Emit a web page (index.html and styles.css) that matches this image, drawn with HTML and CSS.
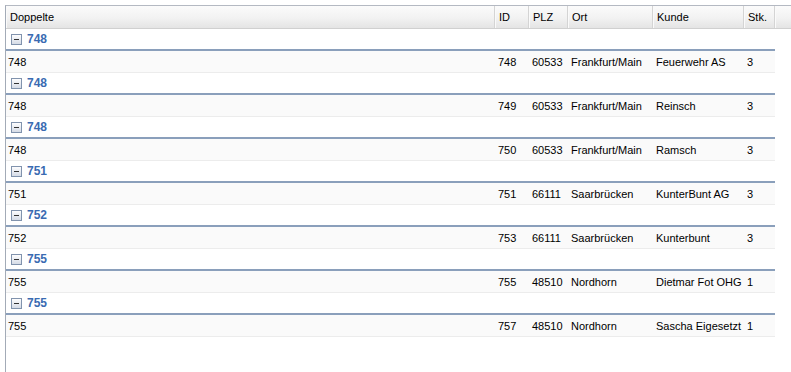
FILE: index.html
```html
<!DOCTYPE html>
<html lang="de">
<head>
<meta charset="utf-8">
<title>Doppelte</title>
<link rel="stylesheet" href="styles.css">
</head>
<body>
<div class="grid">
  <div class="hrow">
    <div class="hc">Doppelte</div>
    <div class="hc">ID</div>
    <div class="hc">PLZ</div>
    <div class="hc">Ort</div>
    <div class="hc">Kunde</div>
    <div class="hc">Stk.</div>
    <div class="hc filler"></div>
  </div>
  <div class="body">
    <div class="group"><span class="tog"></span><span class="gt">748</span></div>
    <div class="row"><div>748</div><div>748</div><div>60533</div><div>Frankfurt/Main</div><div>Feuerwehr AS</div><div>3</div></div>
    <div class="group"><span class="tog"></span><span class="gt">748</span></div>
    <div class="row"><div>748</div><div>749</div><div>60533</div><div>Frankfurt/Main</div><div>Reinsch</div><div>3</div></div>
    <div class="group"><span class="tog"></span><span class="gt">748</span></div>
    <div class="row"><div>748</div><div>750</div><div>60533</div><div>Frankfurt/Main</div><div>Ramsch</div><div>3</div></div>
    <div class="group"><span class="tog"></span><span class="gt">751</span></div>
    <div class="row"><div>751</div><div>751</div><div>66111</div><div>Saarbrücken</div><div>KunterBunt AG</div><div>3</div></div>
    <div class="group"><span class="tog"></span><span class="gt">752</span></div>
    <div class="row"><div>752</div><div>753</div><div>66111</div><div>Saarbrücken</div><div>Kunterbunt</div><div>3</div></div>
    <div class="group"><span class="tog"></span><span class="gt">755</span></div>
    <div class="row"><div>755</div><div>755</div><div>48510</div><div>Nordhorn</div><div>Dietmar Fot OHG</div><div>1</div></div>
    <div class="group"><span class="tog"></span><span class="gt">755</span></div>
    <div class="row"><div>755</div><div>757</div><div>48510</div><div>Nordhorn</div><div>Sascha Eigesetzt</div><div>1</div></div>
  </div>
</div>
</body>
</html>
```
FILE: styles.css
```css
html, body {
  margin: 0;
  padding: 0;
  background: #fff;
  overflow: hidden;
}
body {
  padding: 5px 0 0 5px;
  height: 367px;
  font-family: "Liberation Sans", Arial, sans-serif;
  font-size: 11px;
  color: #000;
}
.grid {
  width: 800px;
  height: 100%;
  border-left: 1px solid #a3abb7;
  border-top: 1px solid #b4b9c2;
  box-sizing: border-box;
}
.hrow {
  display: grid;
  grid-template-columns: 489px 34px 39px 85px 91px 31px 1fr;
  height: 22px;
  border-bottom: 1px solid #d0d0d0;
  background: linear-gradient(#fbfbfb, #f2f2f2 55%, #e4e4e4);
  box-sizing: content-box;
}
.hc {
  padding-left: 4px;
  line-height: 22px;
  border-right: 1px solid #d4d4d4;
  box-shadow: inset 1px 0 0 #fafafa;
  white-space: nowrap;
  overflow: hidden;
}
.hc.filler {
  border-right: none;
}
.body {
  width: 769px;
}
.group {
  height: 20px;
  display: flex;
  align-items: center;
  padding-left: 5px;
  border-bottom: 2px solid #8a9fbb;
  background: #fff;
}
.tog {
  width: 9px;
  height: 9px;
  border: 1px solid #8193ad;
  background: linear-gradient(#fdfdfe, #d5dbe6);
  position: relative;
  margin-right: 5px;
  margin-top: 1px;
}
.tog::after {
  content: "";
  position: absolute;
  left: 2px;
  top: 4px;
  width: 5px;
  height: 1px;
  background: #333;
}
.gt {
  font-weight: bold;
  font-size: 12px;
  color: #3a6bb2;
}
.row {
  display: grid;
  grid-template-columns: 489px 34px 39px 85px 91px 31px;
  height: 20px;
  padding-top: 1px;
  line-height: 21px;
  background: #fafafa;
  border-bottom: 1px solid #ececec;
}
.row > div {
  padding-left: 2px;
  white-space: nowrap;
  overflow: hidden;
}
.row > div:nth-child(n+2) {
  padding-left: 3px;
}
```
